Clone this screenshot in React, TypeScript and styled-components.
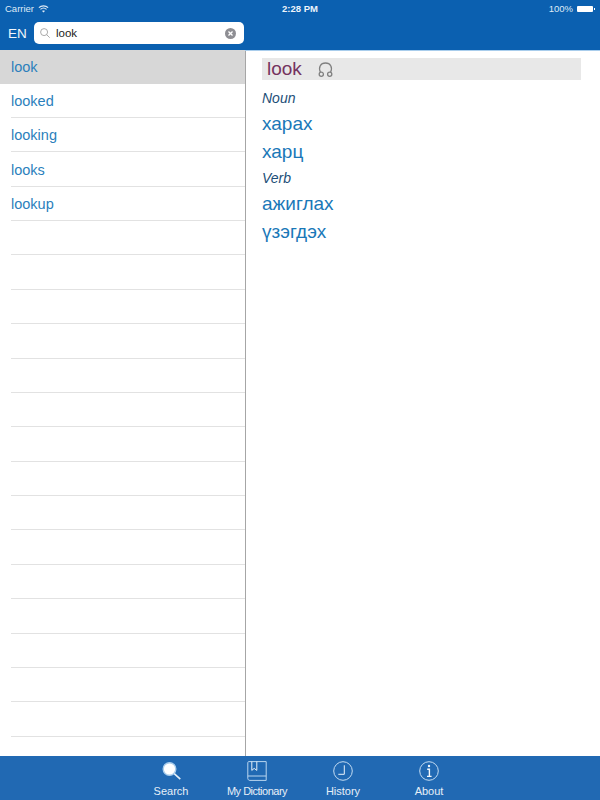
import React from 'react';
import styled, {createGlobalStyle} from 'styled-components';

const GlobalStyle = createGlobalStyle`
  html, body {
    margin: 0;
    padding: 0;
    background: #fff;
    font-family: "Liberation Sans", Arial, sans-serif;
  }
`

const words = ['look', 'looked', 'looking', 'looks', 'lookup']
const ROW_COUNT = 20

type Sense = { pos: string, words: string[] }

const senses: Sense[] = [
    {pos: 'Noun', words: ['харах', 'харц']},
    {pos: 'Verb', words: ['ажиглах', 'үзэгдэх']},
]

const WifiIcon = () => (
    <svg width="11" height="8" viewBox="0 0 12 9" fill="none" stroke="#dfeaf6" strokeWidth="1.3">
        <path d="M0.8 3 C3.6 0.4 8.4 0.4 11.2 3"/>
        <path d="M2.6 4.9 C4.5 3.2 7.5 3.2 9.4 4.9"/>
        <path d="M6 8.4 L4.4 6.7 C5.3 6 6.7 6 7.6 6.7 Z" fill="#dfeaf6" stroke="none"/>
    </svg>
)

const SearchGlass = () => (
    <svg width="10" height="10" viewBox="0 0 10 10" fill="none" stroke="#a0a0a0" strokeWidth="0.9">
        <circle cx="4.1" cy="4.1" r="3.5"/>
        <path d="M6.6 6.6 L9.7 9.7"/>
    </svg>
)

const ClearIcon = () => (
    <svg width="11" height="11" viewBox="0 0 12 12">
        <circle cx="6" cy="6" r="6" fill="#8e8e93"/>
        <path d="M3.8 3.8 L8.2 8.2 M8.2 3.8 L3.8 8.2" stroke="#fff" strokeWidth="1.4"/>
    </svg>
)

const HeadphonesIcon = () => (
    <svg width="15" height="15" viewBox="0 0 15 15" fill="none" stroke="#808080" strokeWidth="1.3">
        <path d="M2.4 10.2 C0.2 5.2 2.5 1 7.5 1 C12.5 1 14.8 5.2 12.6 10.2"/>
        <circle cx="3.3" cy="12.2" r="2.1"/>
        <circle cx="11.7" cy="12.2" r="2.1"/>
    </svg>
)

const TabSearchIcon = () => (
    <svg width="19" height="18" viewBox="0 0 19 18" fill="none">
        <circle cx="7.5" cy="7" r="6.3" fill="#fff" stroke="#a9cdec" strokeWidth="1.4"/>
        <path d="M12.2 11.6 L18.3 17.2" stroke="#e6f0f9" strokeWidth="1.6"/>
    </svg>
)

const TabBookIcon = () => (
    <svg width="20" height="20" viewBox="0 0 20 20" fill="none" stroke="#b9d5ef" strokeWidth="1">
        <path d="M1.8 0.6 H19.2 V19.4 H3 C1.8 19.4 0.8 18.6 0.8 17.4 V1.6 C0.8 1 1.2 0.6 1.8 0.6 Z"/>
        <path d="M0.8 15 H19.2"/>
        <path d="M4.8 0.6 V9.4 L7.2 7.4 L9.8 9.4 V0.6" stroke="#e6f0f9"/>
    </svg>
)

const TabClockIcon = () => (
    <svg width="20" height="20" viewBox="0 0 20 20" fill="none" stroke="#c4dcf2" strokeWidth="1">
        <circle cx="10" cy="10" r="9.3"/>
        <path d="M11.3 4.3 V13.3 H5.3" stroke="#eaf2fa"/>
    </svg>
)

const TabInfoIcon = () => (
    <svg width="20" height="20" viewBox="0 0 20 20" fill="none" stroke="#c4dcf2" strokeWidth="1">
        <circle cx="10" cy="10" r="9.3"/>
        <circle cx="10" cy="5" r="1.2" fill="#f2f7fc" stroke="none"/>
        <path d="M8.2 8.2 H10.4 V15.4 M8 15.4 H12.6" stroke="#f2f7fc" strokeWidth="1.4"/>
    </svg>
)

const tabs = [
    {label: 'Search', icon: <TabSearchIcon/>, tight: false},
    {label: 'My Dictionary', icon: <TabBookIcon/>, tight: true},
    {label: 'History', icon: <TabClockIcon/>, tight: false},
    {label: 'About', icon: <TabInfoIcon/>, tight: false},
]

export default function App() {
    return (
        <Page>
            <GlobalStyle/>
            <Header>
                <StatusBar>
                    <StatusLeft>Carrier <WifiIcon/></StatusLeft>
                    <StatusTime>2:28 PM</StatusTime>
                    <StatusRight>100% <Battery/></StatusRight>
                </StatusBar>
                <SearchRow>
                    <Lang>EN</Lang>
                    <SearchBox>
                        <SearchGlass/>
                        <SearchText>look</SearchText>
                        <ClearIcon/>
                    </SearchBox>
                </SearchRow>
            </Header>
            <Main>
                <ListPane>
                    {Array.from({length: ROW_COUNT}).map((_, i) => (
                        <Row key={i} $selected={i === 0}>
                            <RowText>{words[i]}</RowText>
                        </Row>
                    ))}
                </ListPane>
                <DetailPane>
                    <Headword>
                        <HeadText>look</HeadText>
                        <HeadphonesIcon/>
                    </Headword>
                    <Senses>
                        {senses.map(s => (
                            <React.Fragment key={s.pos}>
                                <Pos>{s.pos}</Pos>
                                {s.words.map(w => <Translation key={w}>{w}</Translation>)}
                            </React.Fragment>
                        ))}
                    </Senses>
                </DetailPane>
            </Main>
            <TabBar>
                {tabs.map(t => (
                    <Tab key={t.label}>
                        <TabIcon>{t.icon}</TabIcon>
                        <TabLabel $tight={t.tight}>{t.label}</TabLabel>
                    </Tab>
                ))}
            </TabBar>
        </Page>
    );
}

const Page = styled.div`
  width: 600px;
  height: 800px;
  display: flex;
  flex-direction: column;
  overflow: hidden;
  background: #fff;
`

const Header = styled.header`
  height: 50px;
  flex: none;
  background: #0b60b0;
  color: #fff;
`

const StatusBar = styled.div`
  height: 17px;
  padding: 0 5px;
  display: grid;
  grid-template-columns: 1fr auto 1fr;
  align-items: center;
  font-size: 9.5px;
`

const StatusLeft = styled.div`
  display: flex;
  align-items: center;
  gap: 4px;
  color: #dfeaf6;
`

const StatusTime = styled.div`
  font-weight: 700;
  color: #eef4fb;
`

const StatusRight = styled.div`
  display: flex;
  justify-content: flex-end;
  align-items: center;
  gap: 4px;
  color: #dfeaf6;
`

const Battery = styled.span`
  display: block;
  width: 16px;
  height: 6px;
  margin-right: 2px;
  background: #fff;
  border-radius: 1px;
  position: relative;

  &::after {
    content: '';
    position: absolute;
    right: -2px;
    top: 2px;
    width: 1px;
    height: 2px;
    background: #fff;
  }
`

const SearchRow = styled.div`
  height: 22px;
  margin-top: 5px;
  padding-left: 8px;
  display: flex;
  align-items: center;
`

const Lang = styled.div`
  width: 26px;
  font-size: 13.5px;
  color: #f2f6fb;
`

const SearchBox = styled.div`
  width: 210px;
  height: 22px;
  box-sizing: border-box;
  padding: 0 8px 0 6px;
  background: #fff;
  border-radius: 5px;
  display: flex;
  align-items: center;
  gap: 6px;
`

const SearchText = styled.span`
  flex: 1;
  font-size: 11.5px;
  color: #222;
`

const Main = styled.main`
  flex: 1;
  min-height: 0;
  display: flex;
  position: relative;

  &::before {
    content: '';
    position: absolute;
    left: 0;
    right: 0;
    top: 0;
    height: 1px;
    background: #a9cdec;
  }
`

const ListPane = styled.div`
  width: 246px;
  flex: none;
  box-sizing: border-box;
  border-right: 1px solid #a6a6a6;
  overflow: hidden;
`

const Row = styled.div<{ $selected: boolean }>`
  height: ${props => props.$selected ? '33.6px' : '34.39px'};
  box-sizing: border-box;
  padding-left: 11px;
  display: flex;
  align-items: center;
  position: relative;
  background: ${props => props.$selected ? '#d7d7d7' : 'transparent'};

  &::after {
    content: '';
    position: absolute;
    left: 11px;
    right: 0;
    bottom: 0;
    height: 1px;
    background: ${props => props.$selected ? 'transparent' : '#e2e2e2'};
  }
`

const RowText = styled.span`
  font-size: 14.5px;
  color: #2b7fbc;
`

const DetailPane = styled.div`
  flex: 1;
  padding: 8px 19px 0 16px;
`

const Headword = styled.div`
  height: 22px;
  padding-left: 5px;
  background: #e8e8e8;
  display: flex;
  align-items: center;
  gap: 16px;
`

const HeadText = styled.span`
  font-size: 19px;
  color: #75335f;
`

const Senses = styled.div`
  padding-top: 6.5px;
`

const Pos = styled.div`
  height: 23.5px;
  display: flex;
  align-items: center;
  font-size: 14px;
  font-style: italic;
  color: #1d4f78;
`

const Translation = styled.div`
  height: 28px;
  display: flex;
  align-items: center;
  font-size: 19px;
  color: #1a78b8;
`

const TabBar = styled.footer`
  height: 44px;
  flex: none;
  background: #2169b3;
  padding-left: 128px;
  display: flex;
`

const Tab = styled.div`
  width: 86px;
  display: flex;
  flex-direction: column;
  align-items: center;
`

const TabIcon = styled.div`
  height: 20px;
  margin: 5px 0 4px;
  display: flex;
  align-items: center;
`

const TabLabel = styled.div<{ $tight: boolean }>`
  font-size: 11px;
  color: #e6eff8;
  white-space: nowrap;
  letter-spacing: ${props => props.$tight ? '-0.5px' : '0'};
`
